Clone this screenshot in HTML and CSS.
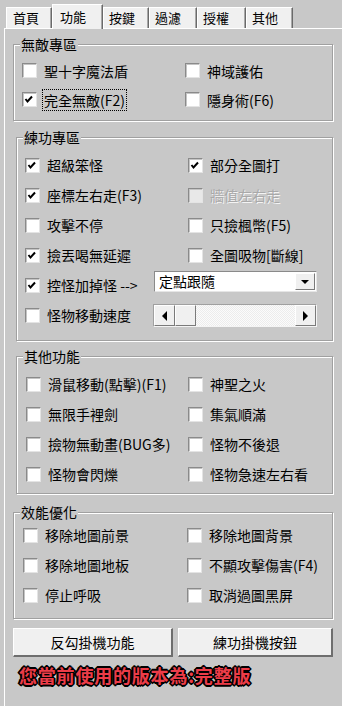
FILE: index.html
```html
<!DOCTYPE html>
<html lang="zh-Hant">
<head>
<meta charset="utf-8">
<link rel="stylesheet" href="styles.css">
</head>
<body>
<div class="tabs">
  <div class="tab t1">首頁</div>
  <div class="tab sel">功能</div>
  <div class="tab t3">按鍵</div>
  <div class="tab t4">過濾</div>
  <div class="tab t5">授權</div>
  <div class="tab t6">其他</div>
</div>
<div class="panel">
  <div class="group g1">
    <div class="gtitle">無敵專區</div>
    <div class="rows r29">
      <label class="cb"><span class="box"></span><span class="txt">聖十字魔法盾</span></label>
      <label class="cb"><span class="box"></span><span class="txt">神域護佑</span></label>
      <label class="cb"><span class="box on"><svg width="13" height="13" viewBox="0 0 13 13"><polyline points="2.5,6 4.5,8.5 9,3.5" fill="none" stroke="#000" stroke-width="2"/></svg></span><span class="txt focus">完全無敵(F2)</span></label>
      <label class="cb"><span class="box"></span><span class="txt">隱身術(F6)</span></label>
    </div>
  </div>

  <div class="group g2">
    <div class="gtitle">練功專區</div>
    <div class="rows">
      <label class="cb"><span class="box on"><svg width="13" height="13" viewBox="0 0 13 13"><polyline points="2.5,6 4.5,8.5 9,3.5" fill="none" stroke="#000" stroke-width="2"/></svg></span><span class="txt">超級笨怪</span></label>
      <label class="cb"><span class="box on"><svg width="13" height="13" viewBox="0 0 13 13"><polyline points="2.5,6 4.5,8.5 9,3.5" fill="none" stroke="#000" stroke-width="2"/></svg></span><span class="txt">部分全圖打</span></label>
      <label class="cb"><span class="box on"><svg width="13" height="13" viewBox="0 0 13 13"><polyline points="2.5,6 4.5,8.5 9,3.5" fill="none" stroke="#000" stroke-width="2"/></svg></span><span class="txt">座標左右走(F3)</span></label>
      <label class="cb dis"><span class="box"></span><span class="txt">牆值左右走</span></label>
      <label class="cb"><span class="box"></span><span class="txt">攻擊不停</span></label>
      <label class="cb"><span class="box"></span><span class="txt">只撿楓幣(F5)</span></label>
      <label class="cb"><span class="box on"><svg width="13" height="13" viewBox="0 0 13 13"><polyline points="2.5,6 4.5,8.5 9,3.5" fill="none" stroke="#000" stroke-width="2"/></svg></span><span class="txt">撿丟喝無延遲</span></label>
      <label class="cb"><span class="box"></span><span class="txt">全圖吸物[斷線]</span></label>
      <div class="wide">
        <label class="cb w129"><span class="box on"><svg width="13" height="13" viewBox="0 0 13 13"><polyline points="2.5,6 4.5,8.5 9,3.5" fill="none" stroke="#000" stroke-width="2"/></svg></span><span class="txt">控怪加掉怪 --&gt;</span></label>
        <div class="combo"><span class="ctext">定點跟隨</span><span class="cbtn"><span class="down"></span></span></div>
      </div>
      <div class="wide">
        <label class="cb w128"><span class="box"></span><span class="txt">怪物移動速度</span></label>
        <div class="scroll">
          <span class="sbtn"><span class="larr"></span></span>
          <span class="sbtn thumb"></span>
          <span class="track"></span>
          <span class="sbtn"><span class="rarr"></span></span>
        </div>
      </div>
    </div>
  </div>

  <div class="group g3">
    <div class="gtitle">其他功能</div>
    <div class="rows">
      <label class="cb"><span class="box"></span><span class="txt">滑鼠移動(點擊)(F1)</span></label>
      <label class="cb"><span class="box"></span><span class="txt">神聖之火</span></label>
      <label class="cb"><span class="box"></span><span class="txt">無限手裡劍</span></label>
      <label class="cb"><span class="box"></span><span class="txt">集氣順滿</span></label>
      <label class="cb"><span class="box"></span><span class="txt">撿物無動畫(BUG多)</span></label>
      <label class="cb"><span class="box"></span><span class="txt">怪物不後退</span></label>
      <label class="cb"><span class="box"></span><span class="txt">怪物會閃爍</span></label>
      <label class="cb"><span class="box"></span><span class="txt">怪物急速左右看</span></label>
    </div>
  </div>

  <div class="group g4">
    <div class="gtitle">效能優化</div>
    <div class="rows">
      <label class="cb"><span class="box"></span><span class="txt">移除地圖前景</span></label>
      <label class="cb"><span class="box"></span><span class="txt">移除地圖背景</span></label>
      <label class="cb"><span class="box"></span><span class="txt">移除地圖地板</span></label>
      <label class="cb"><span class="box"></span><span class="txt">不顯攻擊傷害(F4)</span></label>
      <label class="cb"><span class="box"></span><span class="txt">停止呼吸</span></label>
      <label class="cb"><span class="box"></span><span class="txt">取消過圖黑屏</span></label>
    </div>
  </div>

  <div class="buttons">
    <button class="btn b1">反勾掛機功能</button>
    <button class="btn b2">練功掛機按鈕</button>
  </div>

  <div class="version">您當前使用的版本為:完整版</div>
</div>
</body>
</html>
```

FILE: styles.css
```css
html, body {
  margin: 0;
  padding: 0;
}
body {
  width: 342px;
  height: 706px;
  overflow: hidden;
  background: #c8c8c8;
  color: #000;
  font-family: "Noto Sans CJK TC", "Noto Sans", sans-serif;
  font-size: 14px;
}

/* tabs */
.tabs {
  display: flex;
  align-items: flex-end;
  height: 28px;
  padding-left: 6px;
  position: relative;
  z-index: 1;
}
.tab {
  box-sizing: border-box;
  height: 21px;
  background: #f0f0f0;
  border-top: 1px solid #fff;
  border-left: 1px solid #fff;
  border-right: 1px solid #6a6a6a;
  box-shadow: inset -1px 0 0 #a8a8a8;
  padding-left: 5px;
  font-size: 13px;
  line-height: 19px;
  white-space: nowrap;
}
.t1 { width: 46px; padding-left: 6px; }
.t3 { width: 46px; }
.t4 { width: 48px; }
.t5 { width: 49px; }
.t6 { width: 47px; }
.tab.sel {
  width: 51px;
  height: 25px;
  margin-bottom: -1px;
  padding-left: 7px;
  padding-top: 2px;
}

/* panel */
.panel {
  margin-left: 4px;
  height: 678px;
  border-top: 1px solid #fff;
  border-left: 1px solid #fff;
}

/* group boxes */
.group {
  border: 1px solid #a0a0a0;
  box-shadow: 1px 1px 0 #fff, inset 1px 1px 0 #fff;
  margin-right: 9px;
}
.g1 { margin-top: 15px; margin-left: 8px; }
.g2 { margin-top: 16px; margin-left: 11px; }
.g3 { margin-top: 15px; margin-left: 11px; }
.g4 { margin-top: 18px; margin-left: 8px; }

.gtitle {
  margin: -9px 0 0 6px;
  width: max-content;
  padding: 0 1px;
  line-height: 16px;
  background: #c8c8c8;
}

.rows {
  display: grid;
  grid-template-columns: 163px 1fr;
  grid-auto-rows: 30px;
}
.g1 .rows { grid-auto-rows: 29px; padding: 4px 0 6px 8px; }
.g2 .rows { padding: 5px 0 10px 8px; }
.g3 .rows { padding: 5px 0 4px 9px; grid-template-columns: 162px 1fr; }
.g4 .rows { padding: 0 0 8px 9px; grid-template-columns: 164px 1fr; }

.cb {
  display: flex;
  align-items: center;
  gap: 7px;
  white-space: nowrap;
}
.box {
  box-sizing: border-box;
  flex: none;
  width: 15px;
  height: 15px;
  background: #fff;
  border: 1px solid;
  border-color: #8a8a8a #e4e4e4 #e4e4e4 #8a8a8a;
  box-shadow: inset 1px 1px 0 #c4c4c4;
  display: flex;
  align-items: center;
  justify-content: center;
}
.box svg { display: block; }
.txt { line-height: 18px; }
.focus {
  outline: 1px dotted #000;
  outline-offset: 0;
  padding: 1px 1px 1px 1px;
  margin-left: -1px;
}
.dis .box { background: #e8e8e8; }
.dis .txt { color: #a9a9a9; text-shadow: 1px 1px 0 #f4f4f4; }

/* wide rows with controls */
.wide {
  grid-column: 1 / -1;
  display: flex;
}
.w129 { width: 129px; }
.w128 { width: 128px; }

.combo {
  box-sizing: border-box;
  width: 163px;
  height: 21px;
  margin-top: 1px;
  background: #fff;
  border: 1px solid;
  border-color: #8a8a8a #e6e6e6 #e6e6e6 #8a8a8a;
  display: flex;
  align-items: center;
}
.ctext {
  flex: 1;
  padding-left: 4px;
  line-height: 19px;
  white-space: nowrap;
}
.cbtn {
  box-sizing: border-box;
  width: 20px;
  height: 17px;
  margin-right: 1px;
  background: #f0f0f0;
  border: 1px solid;
  border-color: #fff #7a7a7a #7a7a7a #fff;
  display: flex;
  align-items: center;
  justify-content: center;
}
.down {
  width: 0;
  height: 0;
  border-left: 4px solid transparent;
  border-right: 4px solid transparent;
  border-top: 4px solid #000;
}

.scroll {
  box-sizing: border-box;
  width: 164px;
  height: 23px;
  margin-top: 4px;
  display: flex;
  border: 1px solid;
  border-color: #a0a0a0 #f4f4f4 #f4f4f4 #a0a0a0;
}
.sbtn {
  box-sizing: border-box;
  width: 21px;
  flex: none;
  background: #f0f0f0;
  border: 1px solid;
  border-color: #fff #7a7a7a #7a7a7a #fff;
  display: flex;
  align-items: center;
  justify-content: center;
}
.thumb { width: 21px; }
.track {
  flex: 1;
  background: repeating-conic-gradient(#ececec 0 25%, #fbfbfb 0 50%) 0 0 / 2px 2px;
}
.larr {
  width: 0;
  height: 0;
  border-top: 5px solid transparent;
  border-bottom: 5px solid transparent;
  border-right: 5px solid #000;
}
.rarr {
  width: 0;
  height: 0;
  border-top: 5px solid transparent;
  border-bottom: 5px solid transparent;
  border-left: 5px solid #000;
}

/* buttons */
.buttons {
  display: flex;
  gap: 5px;
  margin: 9px 0 0 8px;
}
.btn {
  box-sizing: border-box;
  height: 29px;
  padding: 0;
  margin: 0;
  background: #f0f0f0;
  border: 1px solid #fff;
  border-right: 2px solid #6e6e6e;
  border-bottom: 2px solid #6e6e6e;
  font-family: "Noto Sans CJK TC", "Noto Sans", sans-serif;
  font-size: 14px;
  color: #000;
  line-height: 24px;
}
.b1 { width: 160px; }
.b2 { width: 155px; }

.version {
  margin: 7px 0 0 14px;
  line-height: 22px;
  font-size: 18px;
  font-weight: bold;
  letter-spacing: 0.8px;
  color: #ec3c48;
  text-shadow:
    1px 0 0 #000, -1px 0 0 #000, 0 1px 0 #000, 0 -1px 0 #000,
    1px 1px 0 #000, -1px -1px 0 #000, 1px -1px 0 #000, -1px 1px 0 #000,
    2px 0 0 #000, -2px 0 0 #000, 0 2px 0 #000, 0 -2px 0 #000;
}
```
